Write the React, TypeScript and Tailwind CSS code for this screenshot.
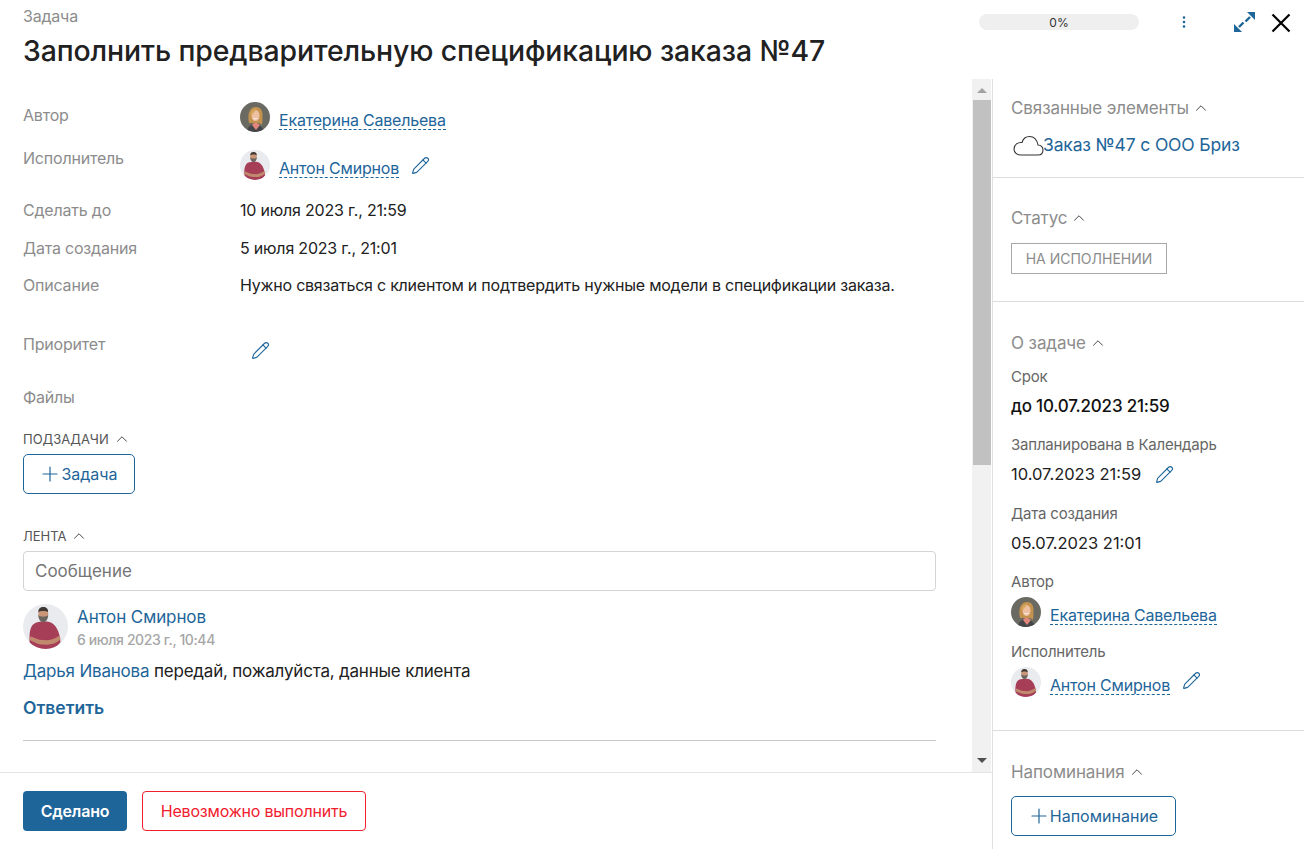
import React from "react";
import { ChevronUp, Pencil, Plus } from "lucide-react";

function WomanAvatar({ size }: { size: number }) {
  return (
    <svg viewBox="0 0 30 30" width={size} height={size} className="shrink-0 rounded-full">
      <rect width="30" height="30" fill="#6a6a62" />
      <path d="M7 30c.5-5 3-7.500 8-7.500s8 2.500 9 7.500z" fill="#45464a" />
      <path d="M12 23l4 5 4-5-3-2h-3z" fill="#e2857a" />
      <path d="M9 21c-1.500-7-.5-15.500 6.500-16 5.500-.4 7.500 4.500 7 9.500-.3 3 .5 6-1 8.500-1-1.500-2-2-4-2-3 0-6 0-8.500 0z" fill="#c4924f" />
      <ellipse cx="15.500" cy="13.500" rx="4" ry="5.500" fill="#eec0a2" />
      <path d="M10.500 12c1-3.500 3-5 6-5-1 2.500-3.500 4-5 7z" fill="#d6a860" />
      <path d="M13 15.800c1.500 1 3.500 1 4.800 0-.8 2-4 2-4.800 0z" fill="#fff" />
    </svg>
  );
}

function ManAvatar({ size }: { size: number }) {
  return (
    <svg viewBox="0 0 30 30" width={size} height={size} className="shrink-0 rounded-full">
      <rect width="30" height="30" fill="#e9ebef" />
      <path d="M4.500 26c-.5-6 0-12 4-13.500 2-.8 7-1 9-.5 4 1 7 6 7.500 13.500l-4 4.500h-13z" fill="#a63e58" />
      <path d="M5 21.500c3 1 6 3 9 2.500 3 .5 7-.5 10.500-3l.5 2.500c-3 3-7 4-11 3.500-3 .3-7-1.500-9.500-3z" fill="#c18a6e" />
      <ellipse cx="13.500" cy="6.500" rx="3.300" ry="4.300" fill="#c99678" />
      <path d="M10.200 7c.5 1 1 1.200 1.600 1.200 1 .4 2.400.4 3.400 0 .6 0 1.100-.2 1.600-1.200 0 3.200-1.500 5.200-3.300 5.200s-3.300-2-3.300-5.200z" fill="#6b6560" />
      <path d="M10.200 5.500c0-2.500 1.300-3.500 3.300-3.500s3.300 1 3.300 3.500c-1-1.200-5.600-1.200-6.600 0z" fill="#3f3936" />
    </svg>
  );
}

function PersonLink({ name }: { name: string }) {
  return (
    <a className="block h-[20px] text-[#1e6599] text-[16px] leading-[21px] tracking-[-0.2px] border-b border-dashed border-[#1e6599] whitespace-nowrap">
      {name}
    </a>
  );
}

function EditIcon() {
  return <Pencil size={19} strokeWidth={1.4} className="text-[#1e6599] shrink-0" />;
}

function Row({ label, top, children }: { label: string; top: string; children?: React.ReactNode }) {
  return (
    <div className={`flex text-[16px] leading-[20px] tracking-[-0.2px] ${top}`}>
      <div className="w-[217px] shrink-0 text-[#8c8c8c]">{label}</div>
      {children}
    </div>
  );
}

function SideTitle({ title }: { title: string }) {
  return (
    <div className="flex items-center gap-[3px] h-[20px] text-[17px] leading-[20px] tracking-[-0.1px] text-[#8c8c8c]">
      {title}
      <ChevronUp size={18} strokeWidth={1.3} className="text-[#444]" />
    </div>
  );
}

function SectionTitle({ title, top }: { title: string; top: string }) {
  return (
    <div className={`${top} flex items-center gap-[4px] h-[18px] text-[13px] leading-[18px] text-[#555]`}>
      {title}
      <ChevronUp size={18} strokeWidth={1.3} className="text-[#444]" />
    </div>
  );
}

function SideLabel({ children, className }: { children: React.ReactNode; className: string }) {
  return <div className={`h-[20px] text-[15px] leading-[22px] tracking-[-0.2px] text-[#666] ${className}`}>{children}</div>;
}

function OutlineButton({ label, width }: { label: string; width: string }) {
  return (
    <button className={`${width} h-[40px] pr-[2px] flex items-center justify-center border border-[#1e6599] rounded-[5px] text-[#1e6599] text-[16px]`}>
      <Plus size={24} strokeWidth={1.2} className="-mr-[1px]" />
      {label}
    </button>
  );
}

export default function App() {
  return (
    <div className="w-[1304px] h-[849px] flex flex-col overflow-hidden bg-white text-[#212121] font-['Inter',sans-serif]">
      <header className="h-[79px] shrink-0 flex justify-between">
        <div className="pl-[23px]">
          <div className="pt-[6px] text-[16px] leading-[20px] tracking-[-0.2px] text-[#8c8c8c]">Задача</div>
          <h1 className="mt-[8px] text-[28.400px] leading-[34px] tracking-[-0.1px] font-medium whitespace-nowrap">
            Заполнить предварительную спецификацию заказа №47
          </h1>
        </div>
        <div className="flex items-start pt-[12px] pr-[13px]">
          <div className="mt-[2px] w-[160px] h-[16px] rounded-full bg-[#efefef] text-center text-[12px] leading-[17px] text-[#333]">
            0%
          </div>
          <svg viewBox="0 0 4 12" width="4" height="12" className="ml-[43px] mt-[4px] text-[#1e6599]" fill="currentColor">
            <circle cx="2" cy="1.500" r="1.300" />
            <circle cx="2" cy="6" r="1.300" />
            <circle cx="2" cy="10.500" r="1.300" />
          </svg>
          <svg viewBox="0 0 21 20" width="21" height="20" className="ml-[48px] text-[#1e6599]" fill="currentColor">
            <path d="M13 0h8v8z" />
            <path d="M8 20H0v-8z" />
            <path d="M16 5l-4.500 4.500" fill="none" stroke="currentColor" strokeWidth="2.400" />
            <path d="M5 15l4.500-4.500" fill="none" stroke="currentColor" strokeWidth="2.400" />
          </svg>
          <svg viewBox="0 0 20 20" width="20" height="20" className="ml-[16px] mt-[1px] text-black" fill="none" stroke="currentColor" strokeWidth="2.200">
            <path d="M1.500 1.500l17 17M18.500 1.500l-17 17" />
          </svg>
        </div>
      </header>

      <div className="flex-1 flex min-h-0">
        <div className="w-[992px] shrink-0 flex flex-col">
          <div className="flex-1 flex min-h-0">
            <main className="w-[972px] pl-[23px] pr-[36px] shrink-0">
              <Row label="Автор" top="mt-[26px]">
                <div className="flex -mt-[3px]">
                  <WomanAvatar size={30} />
                  <div className="ml-[9px] mt-[8px]">
                    <PersonLink name="Екатерина Савельева" />
                  </div>
                </div>
              </Row>
              <Row label="Исполнитель" top="mt-[16px] h-[32px]">
                <div className="flex mt-[2px]">
                  <ManAvatar size={30} />
                  <div className="ml-[9px] mt-[8px]">
                    <PersonLink name="Антон Смирнов" />
                  </div>
                  <div className="ml-[12px] mt-[6px]">
                    <EditIcon />
                  </div>
                </div>
              </Row>
              <Row label="Сделать до" top="mt-[20px]">
                <span>10 июля 2023 г., 21:59</span>
              </Row>
              <Row label="Дата создания" top="mt-[18px]">
                <span>5 июля 2023 г., 21:01</span>
              </Row>
              <Row label="Описание" top="mt-[17px]">
                <span className="tracking-[-0.225px]">Нужно связаться с клиентом и подтвердить нужные модели в спецификации заказа.</span>
              </Row>
              <Row label="Приоритет" top="mt-[39px] h-[33px]">
                <div className="ml-[11px] mt-[7px]">
                  <EditIcon />
                </div>
              </Row>
              <Row label="Файлы" top="mt-[20px]" />

              <SectionTitle title="ПОДЗАДАЧИ" top="mt-[23px]" />
              <div className="mt-[6px]">
                <OutlineButton label="Задача" width="w-[112px]" />
              </div>

              <SectionTitle title="ЛЕНТА" top="mt-[33px]" />
              <div className="mt-[6px] h-[40px] border border-[#d4d4d4] rounded-[4px] px-[11px] pt-[1px] flex items-center text-[17px] text-[#757575]">
                Сообщение
              </div>

              <div className="mt-[13px] flex">
                <ManAvatar size={45} />
                <div className="ml-[9px]">
                  <div className="h-[26px] text-[17px] leading-[26px] tracking-[-0.1px] text-[#1e6599]">Антон Смирнов</div>
                  <div className="text-[14px] leading-[20px] tracking-[-0.4px] font-medium text-[#a6a6a6]">6 июля 2023 г., 10:44</div>
                </div>
              </div>
              <div className="mt-[11px] h-[20px] text-[17px] leading-[20px] tracking-[-0.2px]">
                <span className="text-[#1e6599]">Дарья Иванова</span> передай, пожалуйста, данные клиента
              </div>
              <div className="mt-[17px] h-[20px] text-[17.500px] leading-[20px] font-semibold text-[#1e6599]">Ответить</div>
              <div className="mt-[22px] border-t border-[#c8c8c8]" />
            </main>

            <div className="w-[19px] shrink-0 bg-[#f1f1f1] flex flex-col items-center pl-px">
              <svg viewBox="0 0 10 5" width="10" height="5" className="mt-[9px] text-[#a3a3a3]" fill="currentColor">
                <path d="M5 0l5 5H0z" />
              </svg>
              <div className="mt-[7px] w-full h-[365px] bg-[#c1c1c1]" />
              <svg viewBox="0 0 10 5" width="10" height="5" className="mt-auto mb-[9px] text-[#505050]" fill="currentColor">
                <path d="M0 0h10L5 5z" />
              </svg>
            </div>
          </div>

          <footer className="h-[77px] shrink-0 border-t border-[#e4e4e4] pl-[23px] pt-[18px] flex items-start gap-[15px]">
            <button className="w-[104px] h-[40px] rounded-[4px] bg-[#1e6599] text-white text-[16px] tracking-[-0.2px] font-semibold">Сделано</button>
            <button className="w-[224px] h-[40px] rounded-[4px] border border-[#f0202e] text-[#f0202e] text-[16px] tracking-[-0.2px]">
              Невозможно выполнить
            </button>
          </footer>
        </div>

        <aside className="flex-1 border-l border-[#e0e0e0] text-[16.500px]">
          <section className="h-[99px] border-b border-[#dcdcdc] pl-[18px] pt-[19px]">
            <SideTitle title="Связанные элементы" />
            <div className="mt-[17px] flex items-center h-[20px] text-[17.500px] tracking-[-0.15px] text-[#1e6599] whitespace-nowrap">
              <svg viewBox="0 0 31 21" width="31" height="21" fill="none" stroke="#333" strokeWidth="1.100" className="shrink-0 ml-[2px] -mr-[1px]">
                <path d="M8 20h17c3 0 5-2 5-5s-2-5-5-5c-1-5-4-8.500-8.500-8.500-4 0-6.500 2.500-7.500 6-4-.5-8 2-8 6.500 0 3.500 3 6 7 6z" />
              </svg>
              Заказ №47 с ООО Бриз
            </div>
          </section>

          <section className="h-[124px] border-b border-[#dcdcdc] pl-[18px] pt-[30px]">
            <SideTitle title="Статус" />
            <div className="mt-[15px] w-[156px] h-[31px] border border-[#a8a8a8] flex items-center justify-center text-[14px] text-[#8c8c8c]">
              НА ИСПОЛНЕНИИ
            </div>
          </section>

          <section className="h-[429px] border-b border-[#dcdcdc] pl-[18px] pt-[31px]">
            <SideTitle title="О задаче" />
            <SideLabel className="mt-[13px]">Срок</SideLabel>
            <div className="mt-[10px] h-[20px] text-[17px] leading-[20px] tracking-[-0.2px] font-medium text-[#111]">до 10.07.2023 21:59</div>
            <SideLabel className="mt-[18px]">Запланирована в Календарь</SideLabel>
            <div className="mt-[10px] h-[20px] leading-[20px] flex items-center gap-[14px]">
              10.07.2023 21:59
              <EditIcon />
            </div>
            <SideLabel className="mt-[19px]">Дата создания</SideLabel>
            <div className="mt-[10px] h-[20px] leading-[20px]">05.07.2023 21:01</div>
            <SideLabel className="mt-[18px]">Автор</SideLabel>
            <div className="mt-[6px] flex">
              <WomanAvatar size={30} />
              <div className="ml-[9px] mt-[8px]">
                <PersonLink name="Екатерина Савельева" />
              </div>
            </div>
            <SideLabel className="mt-[14px]">Исполнитель</SideLabel>
            <div className="mt-[6px] flex">
              <ManAvatar size={30} />
              <div className="ml-[9px] mt-[8px]">
                <PersonLink name="Антон Смирнов" />
              </div>
              <div className="ml-[12px] mt-[4px]">
                <EditIcon />
              </div>
            </div>
          </section>

          <section className="pl-[18px] pt-[31px]">
            <SideTitle title="Напоминания" />
            <div className="mt-[14px]">
              <OutlineButton label="Напоминание" width="w-[165px]" />
            </div>
          </section>
        </aside>
      </div>
    </div>
  );
}
